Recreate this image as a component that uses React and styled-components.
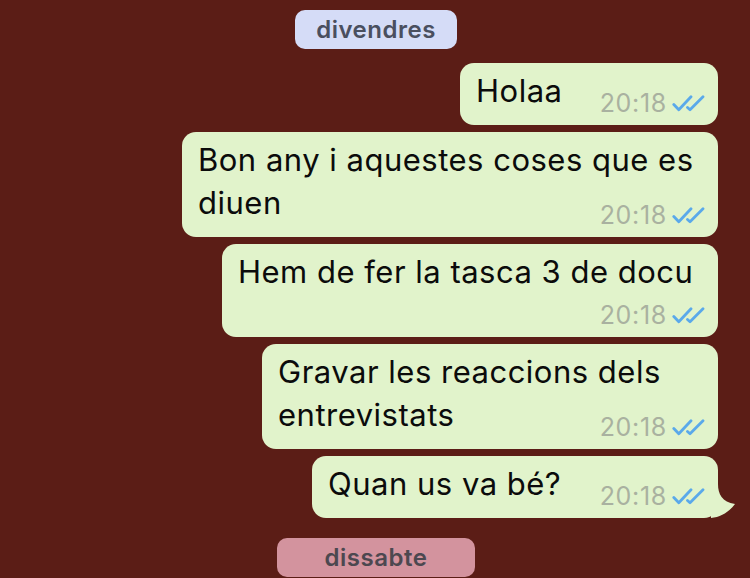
import React from 'react';
import styled, { createGlobalStyle } from 'styled-components';

const GlobalStyle = createGlobalStyle`
  html, body {
    margin: 0;
    padding: 0;
    background: #5b1d16;
    font-family: Inter, "Liberation Sans", sans-serif;
  }
`;

const Page = styled.div`
  display: flex;
  flex-direction: column;
  padding-top: 10px;
  min-height: 578px;
  box-sizing: border-box;
  overflow: hidden;
`;

const DayRow = styled.div`
  display: flex;
  justify-content: center;
  padding-left: 2px;
  margin: ${(p) => p.$margin || '0'};
`;

const DayPill = styled.div`
  width: ${(p) => p.$w}px;
  height: 39px;
  box-sizing: border-box;
  display: flex;
  align-items: center;
  justify-content: center;
  border-radius: 10px;
  background: ${(p) => p.$bg};
  color: ${(p) => p.$fg};
  font-size: 24px;
  font-weight: 600;
  letter-spacing: 0.5px;
`;

const Messages = styled.div`
  display: flex;
  flex-direction: column;
  align-items: flex-end;
  gap: 7px;
  padding-right: 32px;
`;

const Bubble = styled.div`
  position: relative;
  width: ${(p) => p.$w}px;
  box-sizing: border-box;
  padding: 6px 13px 13px 16px;
  background: #e1f3cb;
  border-radius: 14px;
  color: #0b0b0b;
  font-size: 31px;
  line-height: 43px;
  letter-spacing: 0.5px;
`;

const Line = styled.div`
  white-space: nowrap;
`;

const LastRow = styled.div`
  display: flex;
  flex-wrap: wrap;
  align-items: flex-end;
  row-gap: 8px;
`;

const Meta = styled.div`
  margin-left: auto;
  margin-bottom: -5px;
  display: flex;
  align-items: center;
  gap: 5px;
  padding-left: 20px;
  font-size: 25px;
  line-height: 28px;
  letter-spacing: 0.7px;
  color: #a9b1a0;
`;

const Tail = styled.svg`
  position: absolute;
  right: -17px;
  bottom: 0;
`;

function Checks() {
  return (
    <svg width="33" height="17" viewBox="0 0 33 17" fill="none">
      <path
        d="M1.8 9.5 L6.8 14.8 L19 1.8"
        stroke="#5aa9ea"
        strokeWidth="2.8"
        strokeLinecap="round"
        strokeLinejoin="round"
      />
      <path
        d="M15.5 12.5 L18 14.8 L31 1.8"
        stroke="#5aa9ea"
        strokeWidth="2.8"
        strokeLinecap="round"
        strokeLinejoin="round"
      />
    </svg>
  );
}

const messages = [
  { w: 258, lines: ['Holaa'] },
  { w: 536, lines: ['Bon any i aquestes coses que es', 'diuen'] },
  { w: 496, lines: ['Hem de fer la tasca 3 de docu'] },
  { w: 456, lines: ['Gravar les reaccions dels', 'entrevistats'] },
  { w: 406, lines: ['Quan us va bé?'], tail: true },
];

function Message({ w, lines, tail }) {
  const last = lines[lines.length - 1];
  return (
    <Bubble $w={w}>
      {lines.slice(0, -1).map((l) => (
        <Line key={l}>{l}</Line>
      ))}
      <LastRow>
        <Line>{last}</Line>
        <Meta>
          <span>20:18</span>
          <Checks />
        </Meta>
      </LastRow>
      {tail && (
        <Tail width="24" height="34" viewBox="0 0 24 34">
          <path d="M0 0 L7 0 C7 10 11 18 24 20 C18 28 10 33 0 34 Z" fill="#e1f3cb" />
        </Tail>
      )}
    </Bubble>
  );
}

export default function App() {
  return (
    <Page>
      <GlobalStyle />
      <DayRow $margin="0 0 14px 0">
        <DayPill $w={162} $bg="#d5dcf7" $fg="#4a4f5f">
          divendres
        </DayPill>
      </DayRow>
      <Messages>
        {messages.map((m, i) => (
          <Message key={i} {...m} />
        ))}
      </Messages>
      <DayRow $margin="20px 0 0 0">
        <DayPill $w={198} $bg="#d3939e" $fg="#4c4850">
          dissabte
        </DayPill>
      </DayRow>
    </Page>
  );
}
